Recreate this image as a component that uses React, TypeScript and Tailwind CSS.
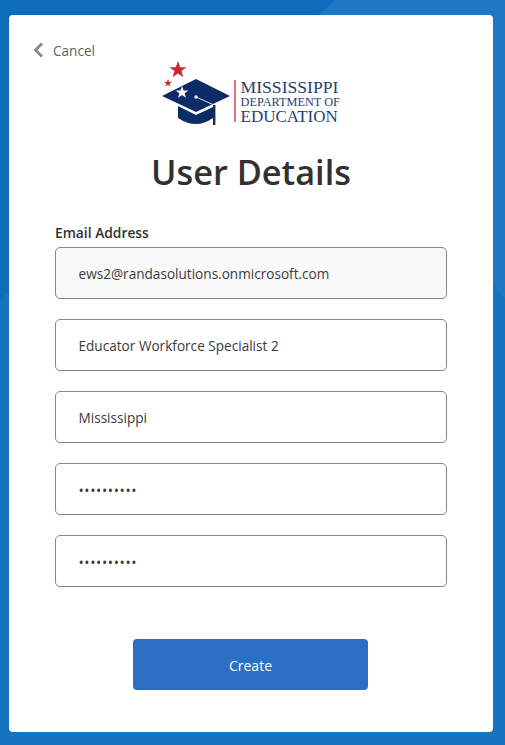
const font = "[font-family:'Open_Sans','Noto_Sans',sans-serif]";

function Field({ value, disabled, dots }: { value: string; disabled?: boolean; dots?: boolean }) {
  return (
    <div
      className={`flex h-[52px] w-[392px] items-center rounded-[5px] border border-[#858585] pl-[22.5px] pt-[3px] text-[#3b3b3b] ${
        disabled ? "bg-[#f9f9f9]" : "bg-white"
      } ${dots ? "text-[14px] tracking-[0.6px]" : "text-[13.6px]"}`}
    >
      {value}
    </div>
  );
}

function Logo() {
  return (
    <div className="flex h-[66px] items-start">
      <svg width="72" height="66" viewBox="0 0 72 66" className="shrink-0">
        <polygon
          fill="#c8282e"
          points="17,1 19.2,7.2 25.6,7.2 20.4,11 22.4,17.2 17,13.4 11.6,17.2 13.6,11 8.4,7.2 14.8,7.2"
        />
        <polygon
          fill="#c8282e"
          points="7,19 8,21.8 11,21.8 8.6,23.6 9.5,26.5 7,24.8 4.5,26.5 5.4,23.6 3,21.8 6,21.8"
        />
        <polygon fill="#0d2b66" points="35,19 69,36 35,52 1,36" />
        <path fill="#0d2b66" d="M17 46 L35 55 L52 47 L52 58 Q35 70 17 58 Z" />
        <polygon
          fill="#ffffff"
          points="21,26 22.6,30.4 27.4,30.4 23.6,33.2 25,37.8 21,35 17,37.8 18.4,33.2 14.6,30.4 19.4,30.4"
        />
        <path d="M35 37 L53 45 L53 62" fill="none" stroke="#dfe4ee" strokeWidth="1" />
        <rect x="52" y="45" width="2.4" height="20" fill="#0d2b66" />
        <circle cx="35" cy="37" r="1.8" fill="#e8ebf2" />
      </svg>
      <div className="ml-[1px] mt-[20px] h-[42px] w-[1.5px] bg-[#d9797c]" />
      <div className="ml-[5px] mt-[19px] flex flex-col items-start whitespace-nowrap font-['Liberation_Serif',serif] text-[#2a3d70]">
        <span className="text-[17.6px] leading-[17px]">MISSISSIPPI</span>
        <span className="text-[12.3px] leading-[12px]">DEPARTMENT OF</span>
        <span className="text-[17px] leading-[17px]">EDUCATION</span>
      </div>
    </div>
  );
}

export default function App() {
  return (
    <div className={`relative h-[745px] w-[505px] overflow-hidden bg-[#1673bf] pt-[15px] ${font}`}>
      <svg className="absolute inset-0" width="505" height="745" viewBox="0 0 505 745">
        <polygon fill="#0e6cbd" points="0,0 336,0 0,300" />
        <polygon fill="#1f78c4" points="336,0 505,0 505,300 300,30" />
      </svg>
      <div className="relative ml-[9px] flex h-[717px] w-[484px] flex-col rounded-[4px] bg-white px-[46px] pt-[25px]">
        <div className="-ml-[24px] flex h-[20px] items-center text-[13.6px] text-[#5f5f5f]">
          <svg width="13" height="16" viewBox="0 0 13 16" className="mr-[9px]">
            <path d="M11 1.5 L4.5 8 L11 14.5" fill="none" stroke="#8a8a8a" strokeWidth="2.8" />
          </svg>
          <span className="pt-[2px]">Cancel</span>
        </div>
        <div className="flex justify-center pr-[1px]">
          <Logo />
        </div>
        <h1 className="mt-[22px] text-center text-[34.3px] font-semibold leading-[48px] text-[#323130]">
          User Details
        </h1>
        <label className="mt-[27px] h-[19px] text-[13.8px] font-semibold leading-[19px] text-[#323130]">
          Email Address
        </label>
        <div className="mt-[5px] flex flex-col gap-[20px]">
          <Field value="ews2@randasolutions.onmicrosoft.com" disabled />
          <Field value="Educator Workforce Specialist 2" />
          <Field value="Mississippi" />
          <Field value="••••••••••" dots />
          <Field value="••••••••••" dots />
        </div>
        <button className="mr-[1px] mt-[52px] flex h-[51px] w-[235px] items-center justify-center self-center rounded-[4px] bg-[#2a6ec6] pt-[1px] text-[14px] font-medium text-white">
          Create
        </button>
      </div>
    </div>
  );
}
